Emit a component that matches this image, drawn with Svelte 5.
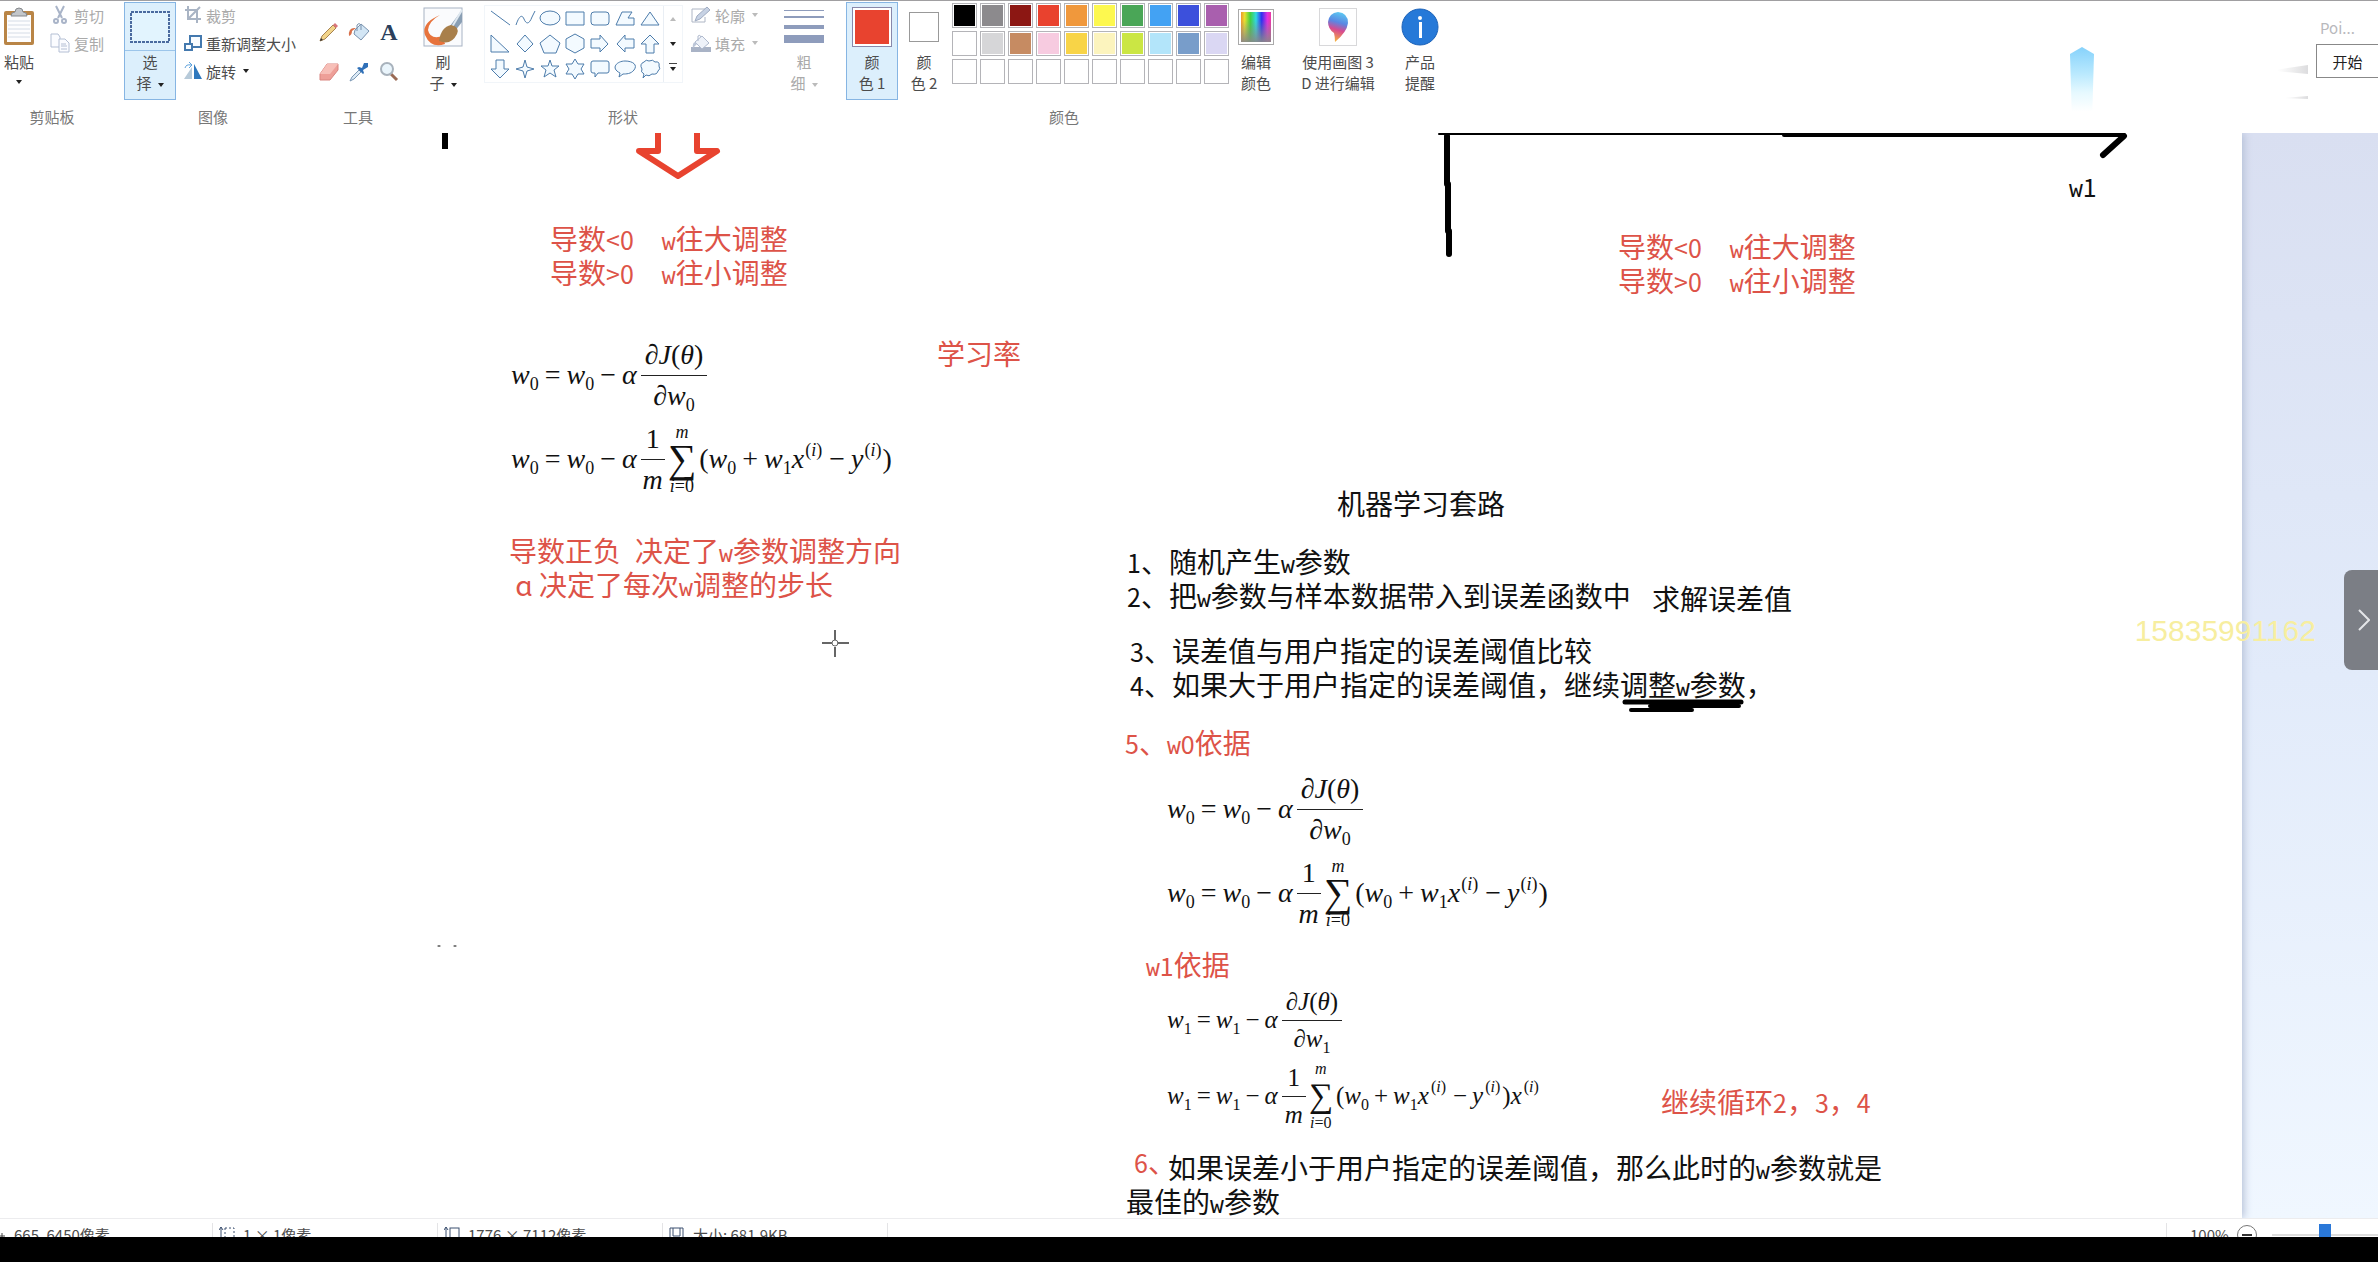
<script lang="ts">
  const palette = [
    '#000000', '#8c8a8d', '#8c1713', '#e9422e', '#f0983c', '#fdf84f', '#4aa657', '#43a2f3', '#3c50dc', '#a95fae',
    '#ffffff', '#d6d6d8', '#c68b62', '#f7cbe0', '#f8d447', '#fcf4be', '#cbe644', '#b3e5fa', '#789dca', '#dad7f3',
    '', '', '', '', '', '', '', '', '', '',
  ];

  const shapes = [
    'M2 3 21 17',
    'M2 17C5 8 8 6 10 11S15 17 18 9L21 3',
    'M1 10a10 7 0 1 0 20 0a10 7 0 1 0-20 0Z',
    'M2 4H20V17H2Z',
    'M5 4H17Q20 4 20 7V14Q20 17 17 17H5Q2 17 2 14V7Q2 4 5 4Z',
    'M8 4H18L14 10H20V17H2Z',
    'M11 4 20 17H2Z',
    'M2 2V19H20Z',
    'M11 2 19 11 11 19 3 11Z',
    'M11 2 21 10 17 20H5L1 10Z',
    'M11 1 20 6V15L11 20 2 15V6Z',
    'M2 6H11V2L19 11 11 19V15H2Z',
    'M20 6H11V2L3 11 11 19V15H20Z',
    'M7 20V11H2L11 2 20 11H15V20Z',
    'M7 2V11H2L11 20 20 11H15V2Z',
    'M11 2 13 9 20 11 13 13 11 20 9 13 2 11 9 9Z',
    'M11 2 13 8H20L15 12 17 19 11 15 5 19 7 12 2 8H9Z',
    'M11 1 14 6H20L17 11 20 16H14L11 21 8 16H2L5 11 2 6H8Z',
    'M4 3H18Q20 3 20 5V13Q20 15 18 15H9L6 19V15H4Q2 15 2 13V5Q2 3 4 3Z',
    'M5 19 6 15C-4 10 3 3 11 3S24 7 20 12C17 16 12 16 9 16Z',
    'M5 4Q7 1 10 3Q14 1 16 4Q21 3 20 8Q22 11 19 13Q18 17 13 16Q10 19 7 17L4 20 5 16Q1 14 3 11Q0 6 5 4Z',
  ];

  // notes typed on the canvas, one entry for each text box
  const notes = [
    { x: 550, y: 88, red: true, lines: ['导数<0　w往大调整', '导数>0　w往小调整'] },
    { x: 937, y: 203, red: true, lines: ['学习率'] },
    { x: 509, y: 400, red: true, lines: ['导数正负\u2002决定了w参数调整方向', ' ɑ 决定了每次w调整的步长'] },
    { x: 1618, y: 96, red: true, lines: ['导数<0　w往大调整', '导数>0　w往小调整'] },
    { x: 2069, y: 35, lines: ['w1'] },
    { x: 1337, y: 353, lines: ['机器学习套路'] },
    { x: 1127, y: 411, lines: ['1、随机产生w参数', '2、把w参数与样本数据带入到误差函数中'] },
    { x: 1652, y: 448, lines: ['求解误差值'] },
    { x: 1130, y: 500, lines: ['3、误差值与用户指定的误差阈值比较', '4、如果大于用户指定的误差阈值，继续调整w参数，'] },
    { x: 1125, y: 592, red: true, lines: ['5、w0依据'] },
    { x: 1146, y: 814, red: true, lines: ['w1依据'] },
    { x: 1661, y: 951, red: true, lines: ['继续循环2，3，4'] },
    { x: 1134, y: 1011, red: true, lines: ['6、'] },
    { x: 1126, y: 1017, indent: true, lines: ['如果误差小于用户指定的误差阈值，那么此时的w参数就是', '最佳的w参数'] },
  ];

  const equations = [
    { x: 511, y: 200, n: 0 },
    { x: 1167, y: 634, n: 0 },
    { x: 1167, y: 849, n: 1, small: true },
  ];

  // letters and digits take half the width of a Chinese character
  const runs = (line: string) => line.split(/([w]|[0-9<>]+)/).filter(Boolean);
  const kind = (run: string) => (run === 'w' ? 'letter' : /^[0-9<>]/.test(run) ? 'digit' : 'han');

  let zoom = $state(50);
</script>

{#snippet w(n)}
  <span class="var"><i>w</i><sub>{n}</sub></span>
{/snippet}

{#snippet pow(name)}
  <span class="var"><i>{name}</i><sup>(<i>i</i>)</sup></span>
{/snippet}

{#snippet left(n)}
  {@render w(n)}<span class="op">=</span>{@render w(n)}<span class="op">−</span><i class="alpha">α</i>
{/snippet}

<div class="app">
  <header class="ribbon">
    <section class="group clipboard">
      <div class="body">
        <button class="big paste">
          <span class="pic">
            <svg width="34" height="40" viewBox="0 0 34 40">
              <rect x="2" y="4" width="30" height="34" rx="2" fill="#b98546" />
              <rect x="5" y="8" width="24" height="27" fill="#fdfdfe" />
              <path d="M6 14H28M6 18H28M6 22H28M6 26H28M6 30H28" stroke="#d5dce6" />
              <path d="M9 9Q9 5 13 5Q13 1 17 1T21 5Q25 5 25 9Z" fill="#c3c6ca" stroke="#85888c" />
            </svg>
          </span>
          <span>粘贴</span>
          <span class="caret"></span>
        </button>
        <div class="rows">
          <button class="row off">
            <svg width="20" height="20" viewBox="0 0 20 20" fill="none" stroke="#a9b4c8" stroke-width="2">
              <path d="M6 1 12 13M14 1 8 13" /><circle cx="6" cy="16" r="2" /><circle cx="14" cy="16" r="2" />
            </svg>剪切
          </button>
          <button class="row off">
            <svg width="20" height="20" viewBox="0 0 20 20" fill="#fbfcff" stroke="#b4bfd4">
              <path d="M1 1H8L10 4V14H1Z" /><path d="M9 6H15L19 10V19H9Z" /><path d="M11 11H16M11 13H17M11 16H17" />
            </svg>复制
          </button>
        </div>
      </div>
      <h2>剪贴板</h2>
    </section>

    <section class="group image">
      <div class="body">
        <button class="big picked split">
          <span class="pic">
            <svg width="40" height="32" viewBox="0 0 40 32">
              <rect x="1" y="1" width="38" height="30" fill="#e2f4fe" stroke="#4a6a9f" stroke-width="2" stroke-dasharray="3 1" />
            </svg>
          </span>
          <span>选</span>
          <span>择<span class="caret"></span></span>
        </button>
        <div class="rows">
          <button class="row off">
            <svg width="18" height="18" viewBox="0 0 18 18" fill="none" stroke="#a9b4c4" stroke-width="2">
              <path d="M4 0V13H17M1 4H13V17M5 12 16 1" />
            </svg>裁剪
          </button>
          <button class="row">
            <svg width="18" height="18" viewBox="0 0 18 18" fill="#f8fcff" stroke="#4479ae" stroke-width="2">
              <rect x="6" y="2" width="11" height="11" /><rect x="1" y="10" width="7" height="6" />
            </svg>重新调整大小
          </button>
          <button class="row">
            <svg width="18" height="18" viewBox="0 0 18 18">
              <path d="M8 5V17H0Z" fill="#b7cad9" /><path d="M10 2V17H18Z" fill="#2e78bd" />
              <path d="M1 6Q2 2 7 3M5 0 8 3 5 6" fill="none" stroke="#5da2dc" />
            </svg>旋转<span class="caret near"></span>
          </button>
        </div>
      </div>
      <h2>图像</h2>
    </section>

    <section class="group tools">
      <div class="body">
        <button aria-label="铅笔">
          <svg width="20" height="20" viewBox="0 0 20 20">
            <path d="M1 19 3 14 14 3 17 6 6 17Z" fill="#f2d48a" stroke="#a78351" />
            <path d="M14 3 16 1 19 4 17 6Z" fill="#d9757a" /><path d="M1 19 2 16 4 18Z" fill="#333" />
          </svg>
        </button>
        <button aria-label="填充">
          <svg width="22" height="20" viewBox="0 0 22 20">
            <path d="M7 8 13 2 21 9 13 18 6 12Z" fill="#d3e6f5" stroke="#7891ad" />
            <path d="M9 9V3Q11 0 13 3V8" fill="none" stroke="#7891ad" /><path d="M8 6Q0 5 1 14Q4 13 4 9Z" fill="#d9704a" />
          </svg>
        </button>
        <button aria-label="文本" class="letter-a">A</button>
        <button aria-label="橡皮擦">
          <svg width="22" height="20" viewBox="0 0 22 20">
            <path d="M2 12 9 2 20 2 20 8 12 18 2 18Z" fill="#ee9f98" stroke="#d98580" /><path d="M2 12 9 2 20 2 12 12Z" fill="#f7bfb8" />
          </svg>
        </button>
        <button aria-label="颜色选取器">
          <svg width="20" height="20" viewBox="0 0 20 20">
            <path d="M1 19 3 15 10 8 12 10 5 17Z" fill="#dceaf5" stroke="#7c98b5" />
            <path d="M8 6 10 5 13 6 15 1 19 1 19 5 14 8 15 11 14 12Z" fill="#2f70b8" />
          </svg>
        </button>
        <button aria-label="放大镜">
          <svg width="20" height="20" viewBox="0 0 20 20">
            <path d="M12 12 18 18" stroke="#9a6b55" stroke-width="3" /><circle cx="8" cy="7" r="6" fill="#eaf5fc" stroke="#a8b2bc" stroke-width="2" />
          </svg>
        </button>
      </div>
      <h2>工具</h2>
    </section>

    <section class="group brush">
      <button class="big">
        <span class="pic">
          <svg width="40" height="40" viewBox="0 0 40 40">
            <rect x="1" y="1" width="38" height="38" fill="#fafbfd" stroke="#a8b3c4" />
            <path d="M39 3 27 19 32 24 39 15Z" fill="#8a9fb4" />
            <path d="M39 3 29 20" stroke="#dfe8f0" stroke-width="2" />
            <path d="M17 8Q-2 16 2 28Q8 42 22 37L20 29Q7 33 5 23Q6 14 17 8Z" fill="#e7733c" />
            <path d="M16 34Q18 20 28 18Q37 20 34 27Q28 39 16 34Z" fill="#a87f4b" />
          </svg>
        </span>
        <span>刷</span>
        <span>子<span class="caret"></span></span>
      </button>
    </section>

    <section class="group shapes">
      <div class="body">
        <div class="gallery">
          <div class="grid">
            {#each shapes as d, i}
              <button aria-label="形状 {i + 1}">
                <svg width="22" height="22" viewBox="0 0 22 22"><path {d} fill={i < 2 ? 'none' : '#f3faff'} stroke="#4d7cab" /></svg>
              </button>
            {/each}
          </div>
          <div class="scroller">
            <button aria-label="向上"><span class="caret up"></span></button>
            <button aria-label="向下"><span class="caret"></span></button>
            <button aria-label="更多"><span class="caret more"></span></button>
          </div>
        </div>
        <div class="rows">
          <button class="row off">
            <svg width="20" height="18" viewBox="0 0 20 18">
              <path d="M14 3H1V16H14V11" fill="none" stroke="#aeb6c5" /><path d="M4 15 6 10 16 1 19 4 9 13Z" fill="#c7d2e4" stroke="#a0acc2" />
            </svg>轮廓<span class="caret near"></span>
          </button>
          <button class="row off">
            <svg width="20" height="18" viewBox="0 0 20 18">
              <rect y="13" width="20" height="5" fill="#a9b3c6" /><path d="M4 8 11 2 18 9 11 15Z" fill="#eef2f9" stroke="#b0bace" />
              <path d="M4 8Q1 9 2 14L6 10Z" fill="#bcc6d8" /><path d="M7 7V2Q9 0 10 3" fill="none" stroke="#b0bace" />
            </svg>填充<span class="caret near"></span>
          </button>
        </div>
      </div>
      <h2>形状</h2>
    </section>

    <section class="group size">
      <button class="big off">
        <span class="pic">
          <svg width="40" height="36" viewBox="0 0 40 36" fill="#8e9cbc">
            <rect width="40" height="1" y="1" /><rect width="40" height="2" y="7" /><rect width="40" height="4" y="16" /><rect width="40" height="8" y="26" />
          </svg>
        </span>
        <span>粗</span>
        <span>细<span class="caret"></span></span>
      </button>
    </section>

    <section class="group colors">
      <div class="body">
        <button class="big picked">
          <span class="pic"><span class="swatch primary"></span></span>
          <span>颜</span>
          <span>色 1</span>
        </button>
        <button class="big">
          <span class="pic"><span class="swatch"></span></span>
          <span>颜</span>
          <span>色 2</span>
        </button>
        <div class="palette">
          {#each palette as color, i}
            <button aria-label="颜色 {i + 1}"><span style="background: {color || 'transparent'}"></span></button>
          {/each}
        </div>
        <button class="big">
          <span class="pic"><span class="rainbow"></span></span>
          <span>编辑</span>
          <span>颜色</span>
        </button>
      </div>
      <h2>颜色</h2>
    </section>

    <section class="group paint3d">
      <button class="big">
        <span class="pic framed">
          <svg width="22" height="32" viewBox="0 0 22 32">
            <defs>
              <linearGradient id="drop" x1="0.6" y1="0" x2="0.4" y2="1">
                <stop offset="0" stop-color="#5cc9f2" /><stop offset="0.35" stop-color="#5b86e2" />
                <stop offset="0.6" stop-color="#d84a8f" /><stop offset="1" stop-color="#f6b73c" />
              </linearGradient>
            </defs>
            <path d="M11 1Q21 2 21 12Q20 21 8 31Q8 26 7 22Q1 18 1 11Q2 2 11 1Z" fill="url(#drop)" />
          </svg>
        </span>
        <span>使用画图 3</span>
        <span>D 进行编辑</span>
      </button>
    </section>

    <section class="group product">
      <button class="big">
        <span class="pic">
          <svg width="38" height="38" viewBox="0 0 38 38">
            <circle cx="19" cy="19" r="18" fill="#2679d8" stroke="#1c62b8" /><circle cx="19" cy="10" r="2" fill="#fff" />
            <rect x="18" y="14" width="3" height="16" fill="#fff" />
          </svg>
        </span>
        <span>产品</span>
        <span>提醒</span>
      </button>
    </section>

    <svg class="beam" width="24" height="76" viewBox="0 0 24 76">
      <defs>
        <linearGradient id="beam" x1="0" y1="0" x2="0" y2="1">
          <stop offset="0" stop-color="#86d2fb" /><stop offset="0.35" stop-color="#b9e9fe" />
          <stop offset="0.6" stop-color="#e6f9ff" /><stop offset="0.85" stop-color="#fff" />
        </linearGradient>
      </defs>
      <path d="M0 7 12 0 24 7 22 76H2Z" fill="url(#beam)" />
    </svg>
    <svg class="streaks" width="34" height="40" viewBox="0 0 34 40">
      <defs>
        <linearGradient id="streak"><stop offset="0.1" stop-color="#fff" /><stop offset="1" stop-color="#dcdcde" /></linearGradient>
      </defs>
      <path d="M0 6 34 1V10L0 7Z" fill="url(#streak)" /><path d="M8 34 34 32V35Z" fill="url(#streak)" />
    </svg>
    <div class="pointer">
      <span>Poi...</span>
      <button>开始</button>
    </div>
  </header>

  <main>
    <div class="paper">
      <svg class="ink" width="2242" height="1085" viewBox="0 0 2242 1085" fill="none" stroke="#000" stroke-linecap="round" stroke-linejoin="round">
        <path d="M658 -4V18H639L678 43 717 18H697V-4" stroke="#e8432f" stroke-width="6" />
        <path d="M445 -4V16" stroke-width="6" stroke-linecap="butt" />
        <path d="M1439 1H1784" stroke-width="2" /><path d="M1784 2H2124" stroke-width="4" />
        <path d="M1447 3V51M1448 51V98M1449 98V121" stroke-width="6" />
        <path d="M2124 3 2103 22" stroke-width="6" />
        <path d="M1625 569H1741" stroke-width="5" /><path d="M1650 573H1739M1631 577H1692" stroke-width="4" />
        <g stroke="#666">
          <path d="M835 497V507M835 514V524M822 510H832M838 510H849" stroke-width="2" stroke-linecap="butt" />
          <circle cx="835" cy="510" r="3" fill="#fff" stroke-width="1" />
        </g>
        <path d="M438 813H440M454 813H456" stroke-width="1" />
      </svg>

      {#each notes as note}
        <p class="note" class:red={note.red} class:indent={note.indent} style="left: {note.x}px; top: {note.y}px">
          {#each note.lines as line}
            <span class="line">{#each runs(line) as run}<span class={kind(run)}>{run}</span>{/each}</span>
          {/each}
        </p>
      {/each}

      {#each equations as eq}
        <div class="equations" class:small={eq.small} style="left: {eq.x}px; top: {eq.y}px">
          <div class="eq">
            {@render left(eq.n)}
            <span class="frac"><span class="wide"><i>∂J</i>(<i>θ</i>)</span><span><i>∂</i>{@render w(eq.n)}</span></span>
          </div>
          <div class="eq">
            {@render left(eq.n)}
            <span class="frac"><span>1</span><span><i>m</i></span></span>
            <span class="sum"><i>m</i><span class="sigma">∑</span><span><i>i</i>=0</span></span>
            <span>(</span>{@render w(0)}<span class="op">+</span>{@render w(1)}{@render pow('x')}<span class="op">−</span>{@render pow('y')}<span>)</span>
            {#if eq.n === 1}{@render pow('x')}{/if}
          </div>
        </div>
      {/each}
    </div>

    <div class="watermark">15835991162</div>
    <button class="drawer" aria-label="展开">
      <svg width="12" height="22" viewBox="0 0 12 22" fill="none" stroke="#e4e5e8" stroke-width="2"><path d="M1 1 11 11 1 21" /></svg>
    </button>
  </main>

  <footer>
    <span class="cell pos">
      <svg width="6" height="16" viewBox="0 0 6 16" stroke="#444"><path d="M0 9H5M2 6V12" /></svg>
      665, 6450像素
    </span>
    <span class="cell">
      <svg width="16" height="16" viewBox="0 0 16 16" fill="none" stroke="#3d5170"><path d="M2 0V16M0 3 2 0 4 3" /><rect x="6" y="1" width="9" height="14" stroke-dasharray="2 2" /></svg>
      1 × 1像素
    </span>
    <span class="cell">
      <svg width="16" height="16" viewBox="0 0 16 16" fill="none" stroke="#3d5170"><path d="M2 0V16M0 3 2 0 4 3" /><rect x="6" y="1" width="9" height="14" /></svg>
      1776 × 7112像素
    </span>
    <span class="cell">
      <svg width="16" height="16" viewBox="0 0 16 16" fill="none" stroke="#3d5170"><path d="M1 1H14V15H1Z" /><path d="M4 1V9H11V1" /></svg>
      大小: 681.9KB
    </span>
    <span class="cell end"></span>
    <span class="cell zoom">
      <label for="zoom">100%</label>
      <button aria-label="缩小"><span></span></button>
      <input id="zoom" type="range" min="0" max="100" bind:value={zoom} />
    </span>
  </footer>
  <div class="letterbox"></div>
</div>

<style>
  :global(body) {
    margin: 0;
    background: #000;
  }

  .app {
    display: flex;
    flex-direction: column;
    min-height: 100vh;
    overflow: hidden;
    background: #fff;
    color: #4c4c4c;
    font: 15px/21px "Noto Sans CJK SC", sans-serif;
  }

  button {
    padding: 0;
    border: 0;
    background: none;
    color: inherit;
    font: inherit;
  }

  svg {
    display: block;
    flex: none;
  }

  /* ribbon */
  .ribbon {
    display: flex;
    box-sizing: border-box;
    height: 133px;
    border-top: 1px solid #a09fa1;
    overflow: hidden;
  }

  .group {
    display: flex;
    flex: none;
    flex-direction: column;
    margin-left: 20px;
  }

  .group h2 {
    margin: 0;
    color: #777;
    font-size: 15px;
    font-weight: 400;
    line-height: 32px;
    text-align: center;
  }

  .body {
    display: flex;
    height: 100px;
  }

  .clipboard { width: 104px; margin-left: 0; }
  .image { width: 178px; }
  .tools { width: 88px; margin-left: 12px; }
  .brush { width: 42px; }
  .shapes { width: 278px; }
  .size { width: 44px; }
  .colors { width: 436px; }
  .paint3d { width: 88px; margin-left: 12px; }
  .product { width: 52px; margin-left: 12px; }

  .big {
    display: flex;
    box-sizing: border-box;
    flex: none;
    flex-direction: column;
    align-items: center;
    height: 98px;
    margin-top: 1px;
    border: 1px solid transparent;
    white-space: nowrap;
  }

  .body > .big { width: 52px; }

  .body > .paste {
    width: 38px;
    margin-right: 4px;
  }

  .big .pic {
    display: flex;
    align-items: center;
    justify-content: center;
    width: 100%;
    height: 48px;
  }

  .picked {
    border-color: #86b5e3;
    background: #dceffc;
  }

  .split .pic {
    box-sizing: border-box;
    border-bottom: 1px solid #9cc5ea;
  }

  .off { color: #aaa; }

  .caret {
    display: inline-block;
    margin-left: 6px;
    border: 3px solid transparent;
    border-top: 4px solid #222;
    border-bottom: 0;
    vertical-align: middle;
  }

  .near { margin-left: 3px; }
  .off .caret { border-top-color: #bbb; }
  .paste .caret { margin: 8px 0 0; }

  .rows {
    display: flex;
    flex-direction: column;
    margin-left: 8px;
  }

  .row {
    display: flex;
    align-items: center;
    gap: 4px;
    height: 28px;
    white-space: nowrap;
  }

  .tools .body {
    display: grid;
    box-sizing: border-box;
    grid-template: 40px 40px / repeat(3, 30px);
    padding-top: 11px;
  }

  .tools button {
    display: grid;
    place-items: center;
  }

  .tools .letter-a {
    color: #2b3f5c;
    font: bold 24px/30px "Liberation Serif", serif;
  }

  .gallery {
    display: flex;
    box-sizing: border-box;
    width: 199px;
    height: 78px;
    margin-top: 4px;
    border: 1px solid #f1f5f9;
  }

  .grid {
    display: grid;
    flex: 1;
    grid-template: repeat(3, 25px) / repeat(7, 25px);
    padding-left: 2px;
  }

  .grid button,
  .scroller button {
    display: grid;
    place-items: center;
  }

  .scroller {
    display: grid;
    width: 18px;
    grid-template-rows: repeat(3, 25px);
    border-left: 1px solid #e9eef4;
  }

  .scroller .caret { margin: 0; }

  .scroller .up {
    border-top: 0;
    border-bottom: 4px solid #bbb;
  }

  .scroller .more {
    position: relative;
  }

  .scroller .more::before {
    content: "";
    position: absolute;
    top: -8px;
    left: -4px;
    width: 8px;
    height: 1px;
    background: #444;
  }

  .swatch {
    box-sizing: border-box;
    width: 30px;
    height: 30px;
    border: 1px solid #999;
    background: #fff;
  }

  .swatch.primary {
    width: 40px;
    height: 40px;
    border-color: #88a;
    background: #e8432f;
    box-shadow: inset 0 0 0 2px #fff;
  }

  .palette {
    display: grid;
    grid-template: repeat(3, 25px) / repeat(10, 25px);
    gap: 3px;
    padding: 2px 1px 0 2px;
  }

  .palette button {
    display: flex;
    padding: 1px;
    border: 1px solid #b4b4b8;
  }

  .palette span { flex: 1; }

  .rainbow {
    box-sizing: border-box;
    width: 36px;
    height: 36px;
    border: 1px solid #aaa;
    background:
      linear-gradient(transparent 30%, #888),
      linear-gradient(90deg, #f07030, #e8e030, #40d040, #30d8e0, #3030f0, #e030e0, #f04080);
    box-shadow: inset 0 0 0 2px #fff;
  }

  .framed svg {
    padding: 2px 7px;
    border: 1px solid #d8d8da;
  }

  .beam {
    margin: 46px 0 0 auto;
  }

  .streaks {
    margin: 63px 8px 0 180px;
  }

  .pointer {
    display: flex;
    flex: none;
    flex-direction: column;
    width: 62px;
    margin-top: 16px;
    color: #b8b8bc;
  }

  .pointer span {
    padding-left: 4px;
    margin-bottom: 6px;
  }

  .pointer button {
    height: 34px;
    border: 1px solid #888;
    border-right: 0;
    background: #fff;
    color: #222;
  }

  /* canvas */
  main {
    position: relative;
    display: flex;
    flex: 1;
    min-height: 1085px;
    padding-right: 136px;
    overflow: hidden;
    background: linear-gradient(#d9dff1, #e2ebfa 50%, #f0f7ff);
  }

  .paper {
    position: relative;
    flex: 1;
    overflow: hidden;
    background: #fff;
    box-shadow: 2px 0 8px #b4bfd6;
  }

  .ink {
    position: absolute;
    top: 0;
    left: 0;
  }

  .note {
    position: absolute;
    margin: 0;
    color: #111;
    font-size: 28px;
    line-height: 34px;
    white-space: pre;
  }

  .note.red { color: #dd5348; }
  .indent .line:first-child { text-indent: 42px; }
  .line {
    display: block;
    height: 34px;
  }
  .digit { font-size: 25px; }
  .letter { font: 23px/34px "DejaVu Sans Mono", monospace; }

  /* formulas */
  .equations {
    --sub: 18px;
    --half: 32px;
    --sigma: 40px;
    --gap: 6px;
    --pow: 1px;
    position: absolute;
    color: #111;
    font: 28px/32px "Liberation Serif", serif;
  }

  .equations.small {
    --sub: 16px;
    --half: 28px;
    --sigma: 34px;
    --gap: 5px;
    --pow: 2px;
    font-size: 25px;
    line-height: 28px;
  }

  .eq {
    display: flex;
    align-items: center;
    height: 84px;
    white-space: nowrap;
  }

  .small .eq { height: 76px; }

  .var {
    display: inline-block;
  }

  sub,
  sup {
    font-size: var(--sub);
    line-height: 0;
  }

  sub { vertical-align: -6px; }

  sup {
    margin: 0 var(--pow);
    vertical-align: 12px;
  }

  .op { margin: 0 var(--gap); }
  .alpha { margin-right: 4px; }

  .frac {
    display: flex;
    flex-direction: column;
    text-align: center;
  }

  .frac > span {
    min-width: 24px;
    height: var(--half);
    padding-bottom: 4px;
  }

  .frac > span + span {
    padding: 4px 0 0;
    border-top: 1px solid #222;
  }

  .frac .wide { padding: 0 4px 4px; }

  .sum {
    display: flex;
    flex-direction: column;
    align-items: center;
    margin: 0 3px;
    font-size: var(--sub);
    line-height: 18px;
  }

  .sigma {
    font-size: var(--sigma);
    line-height: 36px;
  }

  .watermark {
    position: absolute;
    top: 481px;
    right: 62px;
    color: #f7ee9f;
    font: 30px/34px "Liberation Sans", sans-serif;
  }

  .drawer {
    position: absolute;
    top: 437px;
    right: 0;
    display: grid;
    place-items: center;
    width: 34px;
    height: 100px;
    padding-left: 6px;
    border-radius: 8px 0 0 8px;
    background: #7b7e85;
  }

  /* status bar */
  footer {
    display: flex;
    box-sizing: border-box;
    height: 19px;
    border-top: 1px solid #ececee;
    overflow: hidden;
    line-height: 24px;
  }

  .cell {
    display: flex;
    box-sizing: border-box;
    align-items: center;
    gap: 8px;
    width: 225px;
    height: 24px;
    margin-top: 4px;
    padding-left: 6px;
    border-left: 1px solid #e4e4e6;
    white-space: nowrap;
  }

  .pos {
    width: 212px;
    padding-left: 0;
    border-left: 0;
  }

  .zoom {
    width: 212px;
    margin-left: auto;
    padding-left: 23px;
  }

  .zoom button {
    display: grid;
    flex: none;
    place-items: center;
    width: 20px;
    height: 20px;
    border: 1px solid #777;
    border-radius: 50%;
  }

  .zoom button span {
    width: 10px;
    height: 2px;
    background: #333;
  }

  .zoom input {
    flex: none;
    width: 106px;
    height: 24px;
    margin: 0 0 0 auto;
    appearance: none;
    background: linear-gradient(#ddd, #ddd) center / 100% 2px no-repeat;
  }

  .zoom input::-webkit-slider-thumb {
    width: 12px;
    height: 22px;
    appearance: none;
    background: #2a78d8;
  }

  .letterbox {
    height: 25px;
    background: #000;
  }
</style>
